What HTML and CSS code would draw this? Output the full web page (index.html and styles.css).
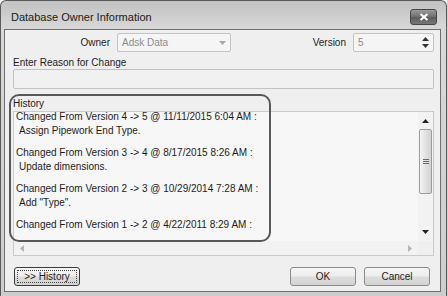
FILE: index.html
```html
<!DOCTYPE html>
<html lang="en">
<head>
    <meta charset="UTF-8">
    <meta name="viewport" content="width=device-width, initial-scale=1.0">
    <title>Database Owner Information</title>
    <link rel="stylesheet" href="styles.css">
</head>
<body>
    <div class="window">
        <div class="titlebar">
            <span class="title">Database Owner Information</span>
            <div class="close-btn">
                <svg width="10" height="8" viewBox="0 0 10 8"><path d="M1.5 1 L8.5 7 M8.5 1 L1.5 7" stroke="#fff" stroke-width="2"/></svg>
            </div>
        </div>

        <div class="client">
            <div class="top-row">
                <span class="owner-label">Owner</span>
                <div class="combo">
                    <span>Adsk Data</span>
                    <svg class="combo-arrow" width="7" height="4" viewBox="0 0 7 4"><polygon points="0,0 7,0 3.5,4" fill="#a8a8a8"/></svg>
                </div>
                <span class="version-label">Version</span>
                <div class="spin">
                    <span>5</span>
                    <div class="spin-arrows">
                        <svg width="7" height="4" viewBox="0 0 7 4"><polygon points="0,4 3.5,0 7,4" fill="#333"/></svg>
                        <svg width="7" height="4" viewBox="0 0 7 4"><polygon points="0,0 7,0 3.5,4" fill="#333"/></svg>
                    </div>
                </div>
            </div>

            <div class="reason-label">Enter Reason for Change</div>
            <div class="reason-box"></div>

            <div class="history-label">History</div>
            <div class="history-list">
                <div class="history-view">
                    <div class="history-text">
                        <div class="entry">
                            <div>Changed From Version 4 -&gt; 5 @ 11/11/2015 6:04 AM :</div>
                            <div class="note">Assign Pipework End Type.</div>
                        </div>
                        <div class="entry">
                            <div>Changed From Version 3 -&gt; 4 @ 8/17/2015 8:26 AM :</div>
                            <div class="note">Update dimensions.</div>
                        </div>
                        <div class="entry">
                            <div>Changed From Version 2 -&gt; 3 @ 10/29/2014 7:28 AM :</div>
                            <div class="note">Add "Type".</div>
                        </div>
                        <div class="entry">
                            <div>Changed From Version 1 -&gt; 2 @ 4/22/2011 8:29 AM :</div>
                        </div>
                    </div>
                </div>
                <div class="vscroll">
                    <div class="scroll-btn up">
                        <svg width="7" height="4" viewBox="0 0 7 4"><polygon points="0,4 3.5,0 7,4" fill="#222"/></svg>
                    </div>
                    <div class="thumb">
                        <span></span><span></span><span></span>
                    </div>
                    <div class="scroll-btn down">
                        <svg width="7" height="4" viewBox="0 0 7 4"><polygon points="0,0 7,0 3.5,4" fill="#222"/></svg>
                    </div>
                </div>
                <div class="hscroll">
                    <svg width="4" height="7" viewBox="0 0 4 7"><polygon points="4,0 4,7 0,3.5" fill="#b4b4b4"/></svg>
                    <svg width="4" height="7" viewBox="0 0 4 7"><polygon points="0,0 0,7 4,3.5" fill="#b4b4b4"/></svg>
                </div>
                <div class="corner"></div>
            </div>

            <div class="button-row">
                <button class="btn btn-focus"><span>&gt;&gt; History</span></button>
                <div class="spacer"></div>
                <button class="btn">OK</button>
                <button class="btn">Cancel</button>
            </div>
        </div>

        <!-- highlight drawn over the history area -->
        <div class="callout"></div>
    </div>
</body>
</html>
```

FILE: styles.css
```css
/* Dialog look, Windows 7 style in grey */
body {
    margin: 0;
    background: #fff;
    font-family: "Liberation Sans", Arial, sans-serif;
    font-size: 10px;
    color: #1c1c1c;
}
.window {
    position: relative;
    width: 447px;
    height: 296px;
    box-sizing: border-box;
    border: 1px solid #5a5a5a;
    border-bottom: none;
    border-radius: 6px 6px 0 0;
    background: linear-gradient(#c2c2c2, #d8d8d8 28px, #cdcdcd);
    display: flex;
    flex-direction: column;
    padding: 0 5px 4px 3px;
}
.titlebar {
    height: 28px;
    display: flex;
    align-items: center;
    padding: 4px 4px 0 7px;
    box-sizing: border-box;
}
.title {
    font-size: 11px;
    color: #1a1a1a;
    flex: 1;
}
.close-btn {
    width: 27px;
    height: 16px;
    box-sizing: border-box;
    border: 1px solid #474747;
    border-radius: 3px;
    background: linear-gradient(#9a9a9a, #6e6e6e 50%, #5c5c5c 51%, #777);
    display: flex;
    align-items: center;
    justify-content: center;
}
.client {
    flex: 1;
    border: 1px solid #6e6e6e;
    background: #efefef;
}
.top-row {
    display: flex;
    align-items: center;
    height: 19px;
    padding: 3px 6px 0 0;
}
.owner-label {
    width: 105px;
    text-align: right;
    margin-right: 7px;
}
.combo, .spin {
    height: 19px;
    box-sizing: border-box;
    border: 1px solid #c4c4c4;
    border-radius: 2px;
    background: #f5f5f5;
    color: #8c8c8c;
    display: flex;
    align-items: center;
    padding: 0 0 0 4px;
}
.combo {
    width: 114px;
}
.combo span, .spin span {
    flex: 1;
}
.combo-arrow {
    margin-right: 4px;
}
.version-label {
    margin-left: auto;
    margin-right: 7px;
}
.spin {
    width: 81px;
}
.spin-arrows {
    display: flex;
    flex-direction: column;
    gap: 3px;
    margin-right: 4px;
}
.reason-label {
    margin-top: 5px;
    line-height: 12px;
    padding-left: 8px;
}
.reason-box {
    height: 20px;
    box-sizing: border-box;
    margin: 0 6px 0 8px;
    border: 1px solid #c2c2c2;
    border-radius: 2px;
    background: #f1f1f1;
}
.history-label {
    margin-top: 9px;
    line-height: 12px;
    padding-left: 8px;
}
.history-list {
    height: 145px;
    box-sizing: border-box;
    margin: 1px 6px 0 8px;
    border: 1px solid #cacaca;
    background: #f7f7f7;
    display: grid;
    grid-template-columns: 1fr 15px;
    grid-template-rows: 1fr 14px;
}
.history-view {
    overflow: hidden;
}
.history-text {
    margin-top: -2px;
    padding-left: 2px;
    line-height: 14px;
    white-space: nowrap;
}
.entry {
    margin-bottom: 8px;
}
.note {
    padding-left: 3px;
}
.vscroll {
    display: flex;
    flex-direction: column;
    background: #f2f2f2;
}
.scroll-btn {
    height: 16px;
    display: flex;
    align-items: center;
    justify-content: center;
}
.scroll-btn.up {
    padding-top: 1px;
}
.thumb {
    height: 65px;
    margin: 0 1px;
    box-sizing: border-box;
    border: 1px solid #9c9c9c;
    border-radius: 2px;
    background: linear-gradient(90deg, #f4f4f4, #e2e2e2 50%, #d2d2d2);
    display: flex;
    flex-direction: column;
    align-items: center;
    justify-content: center;
    gap: 1px;
}
.thumb span {
    width: 6px;
    height: 1px;
    background: #6a6a6a;
}
.scroll-btn.down {
    margin-top: auto;
    height: 18px;
}
.hscroll {
    display: flex;
    align-items: center;
    justify-content: space-between;
    padding: 0 6px;
    background: #f2f2f2;
}
.corner {
    background: #efefef;
}
.button-row {
    display: flex;
    margin-top: 11px;
    padding: 0 10px 0 9px;
    gap: 8px;
}
.spacer {
    flex: 1;
}
.btn {
    width: 66px;
    height: 19px;
    box-sizing: border-box;
    border: 1px solid #8a8a8a;
    border-radius: 3px;
    background: linear-gradient(#f7f7f7, #ececec 48%, #dcdcdc 52%, #d4d4d4);
    font-family: "Liberation Sans", Arial, sans-serif;
    font-size: 10px;
    color: #1c1c1c;
    padding: 0;
}
.btn-focus {
    border-color: #3c3c3c;
    padding: 2px;
}
.btn-focus span {
    display: block;
    height: 100%;
    box-sizing: border-box;
    border: 1px dotted #444;
    line-height: 11px;
}
.callout {
    position: absolute;
    left: 8px;
    top: 93px;
    width: 262px;
    height: 148px;
    box-sizing: border-box;
    border: 2px solid #585858;
    border-radius: 10px;
}
```
